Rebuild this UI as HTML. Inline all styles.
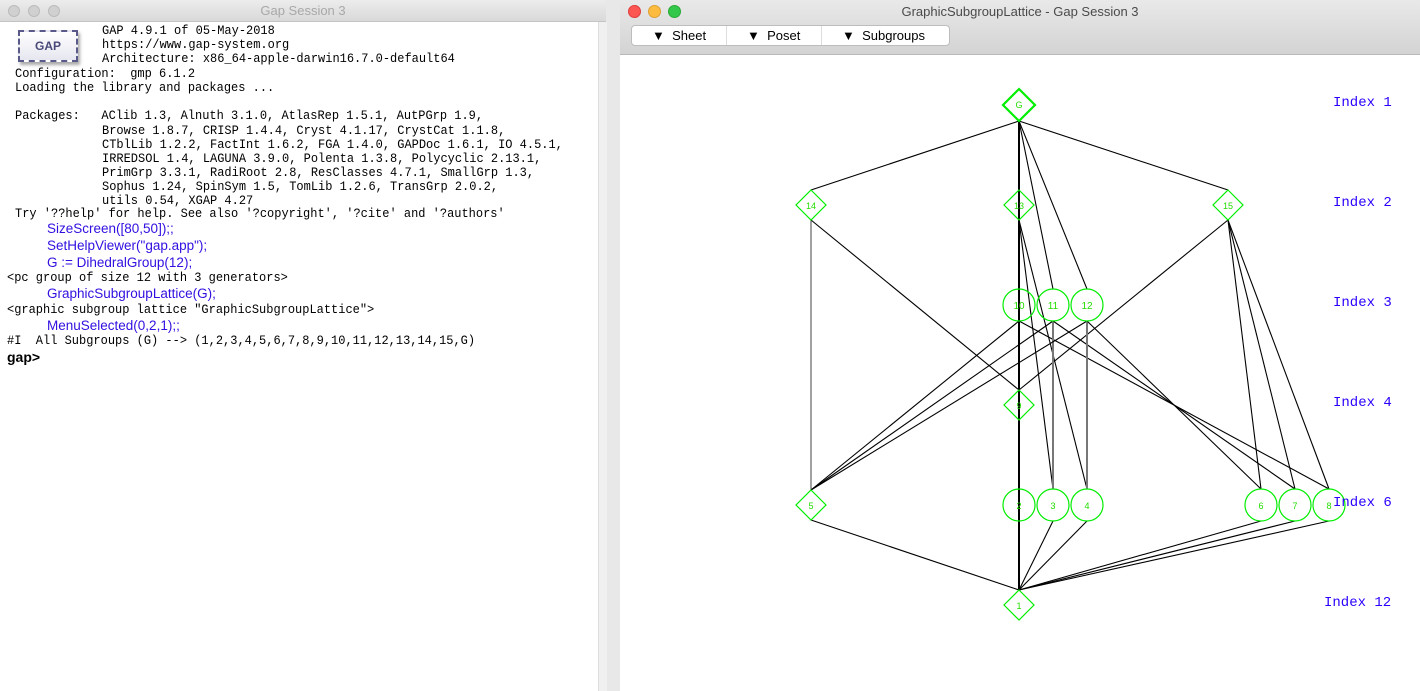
<!DOCTYPE html>
<html><head><meta charset="utf-8"><style>
body{margin:0;width:1420px;height:691px;overflow:hidden;background:#e8e8e8;position:relative;font-family:"Liberation Sans",sans-serif}
.lw{position:absolute;left:0;top:0;width:606px;height:691px;background:#fff}
.tb{position:absolute;left:0;top:0;right:0;height:21px;background:linear-gradient(#ececec,#d9d9d9);border-bottom:1px solid #c4c4c4;text-align:center;font-size:13px;line-height:22px}
.dot{position:absolute;top:5px;width:12px;height:12px;border-radius:50%}
.m{position:absolute;font-family:"Liberation Mono",monospace;font-size:12px;white-space:pre;color:#000;line-height:14px;transform:scaleY(1.1);transform-origin:0 0}
.b{position:absolute;left:47px;font-size:13.5px;color:#3010e0;white-space:pre;line-height:15px}
.rw{position:absolute;left:620px;top:0;width:800px;height:691px;background:#fff}
.lbl{position:absolute;font-family:"Liberation Mono",monospace;font-size:14px;color:#2a00ff}
</style></head><body>
<div class="lw">
<div class="tb" style="color:#a8a8a8">Gap Session 3
<div class="dot" style="left:8px;background:#d0d0d0;border:1px solid #bbb;width:10px;height:10px"></div>
<div class="dot" style="left:28px;background:#d0d0d0;border:1px solid #bbb;width:10px;height:10px"></div>
<div class="dot" style="left:48px;background:#d0d0d0;border:1px solid #bbb;width:10px;height:10px"></div>
</div>
<div style="position:absolute;left:18px;top:30px;width:56px;height:28px;border:2px dashed #5a5a8a;background:linear-gradient(#fff,#e6e6f0);box-shadow:2px 3px 3px #aaa;text-align:center;font:bold 12px 'Liberation Sans';line-height:28px;color:#4a4a7a">GAP</div>
<div style="position:absolute;left:598px;top:22px;width:8px;height:669px;background:#f0f0f0;border-left:1px solid #ddd"></div>
<div class="m" style="left:102px;top:23px">GAP 4.9.1 of 05-May-2018</div>
<div class="m" style="left:102px;top:37px">https://www.gap-system.org</div>
<div class="m" style="left:102px;top:51px">Architecture: x86_64-apple-darwin16.7.0-default64</div>
<div class="m" style="left:15px;top:66px">Configuration:  gmp 6.1.2</div>
<div class="m" style="left:15px;top:80px">Loading the library and packages ...</div>
<div class="m" style="left:15px;top:108px">Packages:   AClib 1.3, Alnuth 3.1.0, AtlasRep 1.5.1, AutPGrp 1.9,</div>
<div class="m" style="left:102px;top:123px">Browse 1.8.7, CRISP 1.4.4, Cryst 4.1.17, CrystCat 1.1.8,</div>
<div class="m" style="left:102px;top:137px">CTblLib 1.2.2, FactInt 1.6.2, FGA 1.4.0, GAPDoc 1.6.1, IO 4.5.1,</div>
<div class="m" style="left:102px;top:151px">IRREDSOL 1.4, LAGUNA 3.9.0, Polenta 1.3.8, Polycyclic 2.13.1,</div>
<div class="m" style="left:102px;top:165px">PrimGrp 3.3.1, RadiRoot 2.8, ResClasses 4.7.1, SmallGrp 1.3,</div>
<div class="m" style="left:102px;top:179px">Sophus 1.24, SpinSym 1.5, TomLib 1.2.6, TransGrp 2.0.2,</div>
<div class="m" style="left:102px;top:193px">utils 0.54, XGAP 4.27</div>
<div class="m" style="left:15px;top:206px">Try '??help' for help. See also '?copyright', '?cite' and '?authors'</div>
<div class="b" style="top:221px">SizeScreen([80,50]);;</div>
<div class="b" style="top:238px">SetHelpViewer("gap.app");</div>
<div class="b" style="top:255px">G := DihedralGroup(12);</div>
<div class="m" style="left:7px;top:270px">&lt;pc group of size 12 with 3 generators&gt;</div>
<div class="b" style="top:286px">GraphicSubgroupLattice(G);</div>
<div class="m" style="left:7px;top:302px">&lt;graphic subgroup lattice "GraphicSubgroupLattice"&gt;</div>
<div class="b" style="top:318px">MenuSelected(0,2,1);;</div>
<div class="m" style="left:7px;top:333px">#I  All Subgroups (G) --&gt; (1,2,3,4,5,6,7,8,9,10,11,12,13,14,15,G)</div>
<div style="position:absolute;left:7px;top:349px;font:bold 14px 'Liberation Sans'">gap&gt;</div>
</div>
<div class="rw">
<div style="position:absolute;left:0;top:0;width:800px;height:54px;background:linear-gradient(#e9e9e9,#d3d3d3);border-bottom:1px solid #b9b9b9"></div>
<div style="position:absolute;left:0;top:0;width:800px;text-align:center;font-size:13px;line-height:23px;color:#4a4a4a">GraphicSubgroupLattice - Gap Session 3</div>
<div class="dot" style="left:8px;background:#fc5753;border:1px solid #df3e3a;width:11px;height:11px"></div>
<div class="dot" style="left:28px;background:#fdbc40;border:1px solid #de9f34;width:11px;height:11px"></div>
<div class="dot" style="left:48px;background:#34c84a;border:1px solid #27aa35;width:11px;height:11px"></div>
<div style="position:absolute;left:11px;top:25px;width:317px;height:19px;background:#fff;border:1px solid #bdbdbd;border-radius:4px;font-size:13px;line-height:19px;display:flex">
<div style="width:95px;border-right:1px solid #ddd;padding-left:20px;box-sizing:border-box">▼&nbsp; Sheet</div>
<div style="width:95px;border-right:1px solid #ddd;padding-left:20px;box-sizing:border-box">▼&nbsp; Poset</div>
<div style="padding-left:20px">▼&nbsp; Subgroups</div>
</div>
</div>
<svg style="position:absolute;left:0;top:0" width="1420" height="691">
<g stroke="#000" stroke-width="1.1" fill="none">
<line x1="1019" y1="121" x2="811" y2="190"/><line x1="1019" y1="121" x2="1228" y2="190"/>
<line x1="1019" y1="121" x2="1053" y2="289"/><line x1="1019" y1="121" x2="1087" y2="289"/>
<line x1="1019" y1="121" x2="1019" y2="590" stroke-width="2"/>
<line x1="811" y1="220" x2="811" y2="490" stroke="#555"/><line x1="811" y1="220" x2="1019" y2="390"/>
<line x1="1019" y1="220" x2="1053" y2="489"/><line x1="1019" y1="220" x2="1087" y2="489"/>
<line x1="1228" y1="220" x2="1019" y2="390"/><line x1="1228" y1="220" x2="1261" y2="489"/>
<line x1="1228" y1="220" x2="1295" y2="489"/><line x1="1228" y1="220" x2="1329" y2="489"/>
<line x1="1019" y1="321" x2="811" y2="490"/><line x1="1019" y1="321" x2="1329" y2="489"/>
<line x1="1053" y1="321" x2="811" y2="490"/><line x1="1053" y1="321" x2="1053" y2="489" stroke="#777" stroke-width="2"/><line x1="1053" y1="321" x2="1295" y2="489"/>
<line x1="1087" y1="321" x2="811" y2="490"/><line x1="1087" y1="321" x2="1087" y2="489" stroke="#777" stroke-width="2"/><line x1="1087" y1="321" x2="1261" y2="489"/>
<line x1="811" y1="520" x2="1019" y2="590"/>
<line x1="1053" y1="521" x2="1019" y2="590"/><line x1="1087" y1="521" x2="1019" y2="590"/>
<line x1="1261" y1="521" x2="1019" y2="590"/><line x1="1295" y1="521" x2="1019" y2="590"/><line x1="1329" y1="521" x2="1019" y2="590"/>
</g>
<g stroke="#00ee00" stroke-width="1.2" fill="none">
<polygon points="1019,89 1035,105 1019,121 1003,105" stroke-width="2.2"/>
<polygon points="811,190 826,205 811,220 796,205"/>
<polygon points="1019,190 1034,205 1019,220 1004,205"/>
<polygon points="1228,190 1243,205 1228,220 1213,205"/>
<circle cx="1019" cy="305" r="16"/><circle cx="1053" cy="305" r="16"/><circle cx="1087" cy="305" r="16"/>
<polygon points="1019,390 1034,405 1019,420 1004,405"/>
<polygon points="811,490 826,505 811,520 796,505"/>
<circle cx="1019" cy="505" r="16"/><circle cx="1053" cy="505" r="16"/><circle cx="1087" cy="505" r="16"/>
<circle cx="1261" cy="505" r="16"/><circle cx="1295" cy="505" r="16"/><circle cx="1329" cy="505" r="16"/>
<polygon points="1019,590 1034,605 1019,620 1004,605"/>
</g>
<g fill="#22dd00" font-family="Liberation Sans,sans-serif" font-size="9" text-anchor="middle">
<text x="1019" y="108">G</text><text x="811" y="209">14</text><text x="1019" y="209">13</text><text x="1228" y="209">15</text>
<text x="1019" y="309" font-size="10">10</text><text x="1053" y="309" font-size="10">11</text><text x="1087" y="309" font-size="10">12</text>
<text x="1019" y="409">9</text><text x="811" y="509">5</text>
<text x="1019" y="509">2</text><text x="1053" y="509">3</text><text x="1087" y="509">4</text>
<text x="1261" y="509">6</text><text x="1295" y="509">7</text><text x="1329" y="509">8</text>
<text x="1019" y="609">1</text>
</g>
</svg>
<div class="lbl" style="left:1333px;top:95px">Index 1</div>
<div class="lbl" style="left:1333px;top:195px">Index 2</div>
<div class="lbl" style="left:1333px;top:295px">Index 3</div>
<div class="lbl" style="left:1333px;top:395px">Index 4</div>
<div class="lbl" style="left:1333px;top:495px">Index 6</div>
<div class="lbl" style="left:1324px;top:595px">Index 12</div>
</body></html>
